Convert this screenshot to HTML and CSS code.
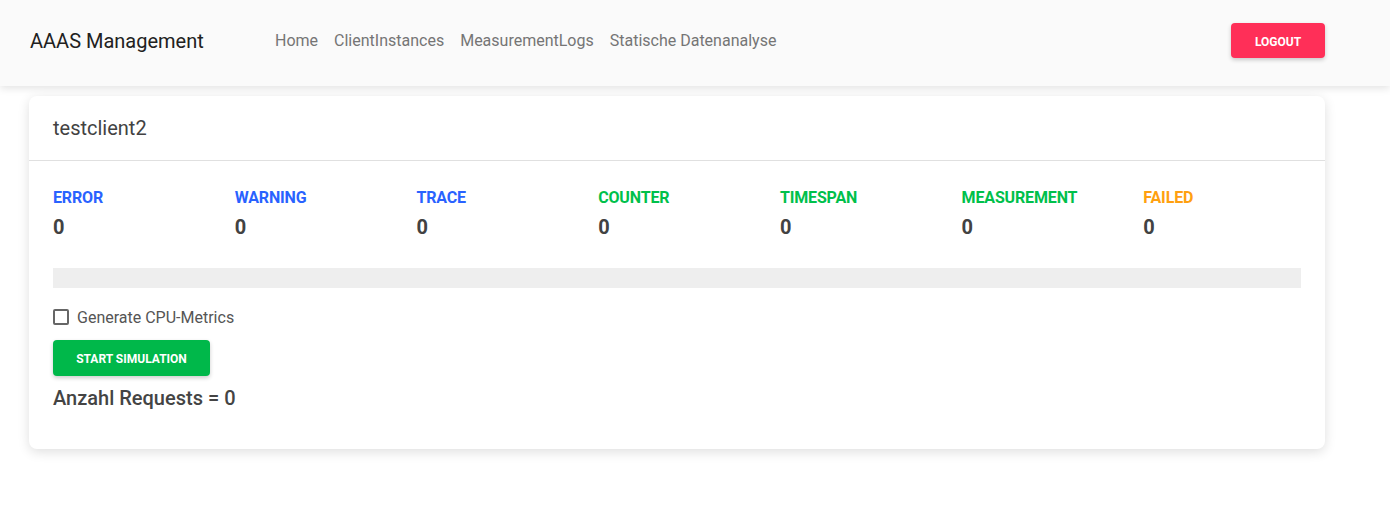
FILE: index.html
```html
<!DOCTYPE html>
<html lang="de">
<head>
<meta charset="utf-8">
<title>AAAS Management</title>
<link rel="stylesheet" href="styles.css">
</head>
<body>
<header class="topbar">
  <div class="brand">AAAS Management</div>
  <nav class="nav">
    <a href="#">Home</a>
    <a href="#">ClientInstances</a>
    <a href="#">MeasurementLogs</a>
    <a href="#">Statische Datenanalyse</a>
  </nav>
  <button class="btn btn-logout">LOGOUT</button>
</header>
<main class="main">
  <section class="card">
    <div class="card-header">testclient2</div>
    <div class="card-body">
      <div class="stats">
        <div class="stat"><div class="label blue">ERROR</div><div class="value">0</div></div>
        <div class="stat"><div class="label blue">WARNING</div><div class="value">0</div></div>
        <div class="stat"><div class="label blue">TRACE</div><div class="value">0</div></div>
        <div class="stat"><div class="label green">COUNTER</div><div class="value">0</div></div>
        <div class="stat"><div class="label green">TIMESPAN</div><div class="value">0</div></div>
        <div class="stat"><div class="label green">MEASUREMENT</div><div class="value">0</div></div>
        <div class="stat"><div class="label orange">FAILED</div><div class="value">0</div></div>
      </div>
      <div class="progress"></div>
      <label class="check">
        <span class="box"></span>
        <span>Generate CPU-Metrics</span>
      </label>
      <button class="btn btn-start">START SIMULATION</button>
      <div class="requests">Anzahl Requests = 0</div>
    </div>
  </section>
</main>
</body>
</html>
```

FILE: styles.css
```css
* { box-sizing: border-box; }
html, body { margin: 0; padding: 0; background: #ffffff; }
body { font-family: Roboto, "Noto Sans", Arial, sans-serif; color: #444; }

.topbar {
  height: 86px;
  background: #fafafa;
  display: flex;
  align-items: center;
  padding: 0 65px 0 30px;
  box-shadow: 0 2px 8px rgba(0,0,0,0.12);
  position: relative;
  z-index: 1;
}
.brand {
  font-size: 20px;
  color: #212121;
  width: 245px;
  margin-top: -4px;
}
.nav {
  display: flex;
  gap: 16px;
  flex: 1;
  margin-top: -6px;
}
.nav a {
  font-size: 16px;
  color: #757575;
  text-decoration: none;
}
.btn {
  border: none;
  font-family: Roboto, "Noto Sans", Arial, sans-serif;
  font-weight: 700;
  font-size: 12px;
  color: #fff;
  border-radius: 4px;
  cursor: pointer;
  box-shadow: 0 2px 4px rgba(0,0,0,0.2);
}
.btn-logout {
  background: #ff2f58;
  width: 94px;
  height: 35px;
  margin-top: -5px;
  padding-top: 3px;
}

.main {
  padding: 10px 65px 40px 29px;
  background: #fff;
}
.card {
  background: #fff;
  border-radius: 8px;
  box-shadow: 0 3px 12px rgba(0,0,0,0.13);
}
.card-header {
  height: 65px;
  border-bottom: 1px solid #e0e0e0;
  padding: 0 24px;
  display: flex;
  align-items: center;
  font-size: 20px;
  color: #424242;
}
.card-body {
  padding: 25px 24px 37px;
}
.stats {
  display: flex;
  margin: 0 -12px;
}
.stat {
  flex: 1;
  padding: 0 12px;
}
.label {
  font-size: 16px;
  font-weight: 700;
  line-height: 24px;
  letter-spacing: -0.15px;
}
.blue { color: #2962ff; }
.green { color: #00c04b; }
.orange { color: #ffa010; }
.value {
  font-size: 20px;
  font-weight: 700;
  line-height: 34px;
  color: #424242;
}
.progress {
  margin-top: 24px;
  height: 20px;
  background: #eeeeee;
}
.check {
  margin-top: 19px;
  height: 20px;
  display: flex;
  align-items: center;
  gap: 8px;
  font-size: 16px;
  color: #555;
}
.box {
  width: 16px;
  height: 16px;
  border: 2px solid #666;
  border-radius: 2px;
}
.btn-start {
  display: block;
  margin-top: 13px;
  background: #00b84a;
  width: 157px;
  height: 36px;
  padding-top: 2px;
}
.requests {
  margin-top: 8px;
  font-size: 20px;
  font-weight: 500;
  line-height: 28px;
  color: #444;
}
```
